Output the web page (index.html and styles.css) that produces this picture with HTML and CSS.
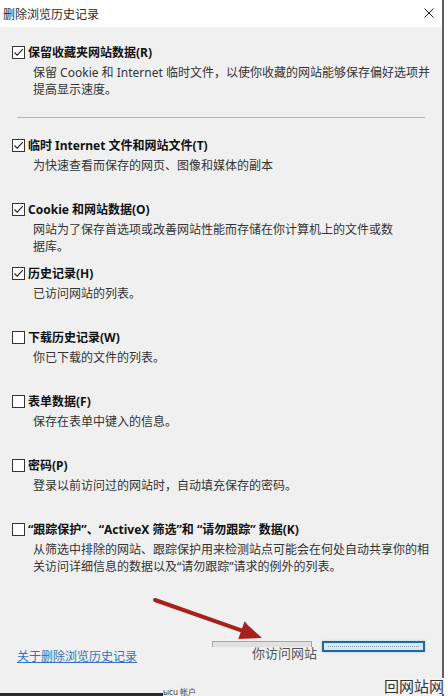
FILE: index.html
```html
<!doctype html>
<html lang="zh-CN">
<head>
    <meta charset="utf-8">
    <meta name="viewport" content="width=device-width, initial-scale=1.0">
    <title>删除浏览历史记录</title>
    <link rel="stylesheet" href="styles.css">
</head>
<body>
    <div class="dialog">
        <div class="titlebar">
            <span class="title">删除浏览历史记录</span>
            <svg class="close" width="10" height="10" viewBox="0 0 10 10"><path d="M0.5 0.5 L9.5 9.5 M9.5 0.5 L0.5 9.5" stroke="#222" stroke-width="1" fill="none"/></svg>
        </div>
        <div class="content">
            <div class="option option-keep">
                <div class="option-head"><span class="box"><svg viewBox="0 0 13 13"><path d="M2.5 6.5 L5.2 9.2 L10.8 3.2" stroke="#222" stroke-width="1.1" fill="none"/></svg></span>保留收藏夹网站数据(R)</div>
                <p class="option-desc">保留 Cookie 和 Internet 临时文件，以使你收藏的网站能够保存偏好选项并<br>提高显示速度。</p>
            </div>
            <hr class="divider">
            <div class="options">
                <div class="option">
                    <div class="option-head"><span class="box"><svg viewBox="0 0 13 13"><path d="M2.5 6.5 L5.2 9.2 L10.8 3.2" stroke="#222" stroke-width="1.1" fill="none"/></svg></span>临时 Internet 文件和网站文件(T)</div>
                    <p class="option-desc">为快速查看而保存的网页、图像和媒体的副本</p>
                </div>
                <div class="option">
                    <div class="option-head"><span class="box"><svg viewBox="0 0 13 13"><path d="M2.5 6.5 L5.2 9.2 L10.8 3.2" stroke="#222" stroke-width="1.1" fill="none"/></svg></span>Cookie 和网站数据(O)</div>
                    <p class="option-desc">网站为了保存首选项或改善网站性能而存储在你计算机上的文件或数<br>据库。</p>
                </div>
                <div class="option">
                    <div class="option-head"><span class="box"><svg viewBox="0 0 13 13"><path d="M2.5 6.5 L5.2 9.2 L10.8 3.2" stroke="#222" stroke-width="1.1" fill="none"/></svg></span>历史记录(H)</div>
                    <p class="option-desc">已访问网站的列表。</p>
                </div>
                <div class="option">
                    <div class="option-head"><span class="box"></span>下载历史记录(W)</div>
                    <p class="option-desc">你已下载的文件的列表。</p>
                </div>
                <div class="option">
                    <div class="option-head"><span class="box"></span>表单数据(F)</div>
                    <p class="option-desc">保存在表单中键入的信息。</p>
                </div>
                <div class="option">
                    <div class="option-head"><span class="box"></span>密码(P)</div>
                    <p class="option-desc">登录以前访问过的网站时，自动填充保存的密码。</p>
                </div>
                <div class="option">
                    <div class="option-head"><span class="box"></span>“跟踪保护”、“ActiveX 筛选”和 “请勿跟踪” 数据(K)</div>
                    <p class="option-desc">从筛选中排除的网站、跟踪保护用来检测站点可能会在何处自动共享你的相<br>关访问详细信息的数据以及“请勿跟踪”请求的例外的列表。</p>
                </div>
            </div>
            <div class="footer">
                <a class="help-link" href="#">关于删除浏览历史记录</a>
                <div class="buttons">
                    <div class="btn-col">
                        <span class="btn-grey"></span>
                        <span class="btn-ghost">你访问网站</span>
                    </div>
                    <span class="btn-blue"></span>
                </div>
            </div>
        </div>
        <div class="taskbar">
            <span class="taskbar-line"></span>
            <span class="taskbar-text">ыcu 帐户</span>
        </div>
        <!-- red annotation arrow drawn over the dialog -->
        <svg class="arrow" width="120" height="60" viewBox="0 0 120 60">
            <path d="M5 8 L92 38.6" stroke="#a8201a" stroke-width="4" stroke-linecap="round" fill="none"/>
            <path d="M112 46 L88.3 47.1 L94.3 30.1 Z" fill="#a8201a"/>
            <path d="M94.3 30.1 L97 33" stroke="#7a3c8a" stroke-width="1.5"/>
        </svg>
    </div>
    <span class="watermark">回网站网</span>
</body>
</html>
```

FILE: styles.css
```css
body {
    position: relative;
    margin: 0;
    padding: 0;
    background-color: #fff;
    font-family: "Noto Sans", "Noto Sans CJK SC", sans-serif;
    color: #222;
}
.dialog {
    position: relative;
    width: 444px;
    height: 696px;
    box-sizing: border-box;
    border-right: 2px solid #5e5e5e;
    background-color: #f0f0f0;
    display: flex;
    flex-direction: column;
    overflow: hidden;
}
.titlebar {
    height: 27px;
    background-color: #fff;
    display: flex;
    align-items: center;
    justify-content: space-between;
    padding: 0 8px 0 3px;
}
.title {
    font-size: 12px;
    color: #2a2a2a;
}
.close {
    display: block;
    margin-top: -2px;
}
.content {
    padding: 16px 17px 0 12px;
}
.option {
    height: 64px;
}
.option-keep {
    height: 74px;
}
.option-head {
    display: flex;
    align-items: center;
    height: 18px;
    font-size: 12px;
    font-weight: bold;
    color: #111;
    white-space: nowrap;
}
.box {
    width: 13px;
    height: 13px;
    box-sizing: border-box;
    border: 1px solid #333;
    background-color: #fff;
    margin-right: 3px;
    flex-shrink: 0;
    position: relative;
}
.box svg {
    position: absolute;
    left: -1px;
    top: -1px;
    width: 13px;
    height: 13px;
}
.option-desc {
    margin: 3px 0 0 21px;
    font-size: 12px;
    line-height: 17px;
    color: #333;
    white-space: nowrap;
}
.divider {
    margin: 0 0 0 5px;
    border: none;
    height: 1px;
    background-color: #b9b9b9;
}
.options {
    padding-top: 18px;
}
.footer {
    display: flex;
    align-items: flex-start;
    padding-top: 57px;
}
.help-link {
    margin: 7px 0 0 5px;
    font-size: 12px;
    line-height: 17px;
    color: #2d74bd;
    text-decoration: underline;
}
.buttons {
    margin-left: auto;
    display: flex;
    gap: 10px;
}
.btn-col {
    width: 100px;
    display: flex;
    flex-direction: column;
}
.btn-grey {
    display: block;
    height: 6px;
    box-sizing: border-box;
    border: 1px solid #a9a9a9;
    border-bottom: none;
    background-color: #e1e1e1;
}
.btn-ghost {
    margin: -2px 0 0 40px;
    font-size: 13px;
    line-height: 16px;
    color: #555;
    white-space: nowrap;
}
.btn-blue {
    position: relative;
    width: 103px;
    height: 11px;
    box-sizing: border-box;
    border: 2px solid #24679c;
    background-color: #d4eaf8;
    box-shadow: 0 0 2px #8fc8ee;
}
.btn-blue::after {
    content: "";
    position: absolute;
    left: 4px;
    right: 4px;
    top: 3px;
    border-top: 1px dotted #8a9aa8;
}
.taskbar {
    margin-top: auto;
    height: 9px;
    display: flex;
    align-items: flex-end;
}
.taskbar-line {
    width: 163px;
    height: 3px;
    background-color: #2a2a2a;
}
.taskbar-text {
    font-size: 8px;
    line-height: 9px;
    color: #444;
}
.arrow {
    position: absolute;
    left: 150px;
    top: 592px;
}
.watermark {
    position: absolute;
    left: 384px;
    top: 678px;
    font-size: 15px;
    line-height: 16px;
    color: #333;
    white-space: nowrap;
    background-color: #f4f4f4;
}
```
